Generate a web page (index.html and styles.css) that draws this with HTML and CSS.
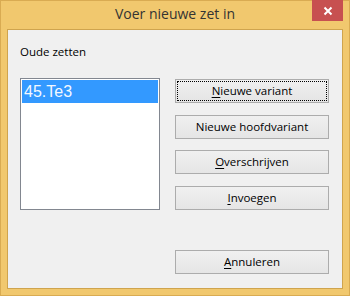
FILE: index.html
```html
<!DOCTYPE html>
<html>
<head>
<meta charset="utf-8">
<link rel="stylesheet" href="styles.css">
</head>
<body>
<div class="window">
  <div class="titlebar">
    <div class="spacer"></div>
    <div class="title">Voer nieuwe zet in</div>
    <div class="close" aria-label="Sluiten">
      <svg width="10" height="10" viewBox="0 0 10 10"><path d="M1.5 1.5 L8.5 8.5 M8.5 1.5 L1.5 8.5" stroke="#fff" stroke-width="2" fill="none"/></svg>
    </div>
  </div>
  <div class="client">
    <div class="label">Oude zetten</div>
    <div class="main">
      <div class="listbox">
        <div class="item selected">45.Te3</div>
      </div>
      <div class="buttons">
        <button class="btn default"><u>N</u>ieuwe variant</button>
        <button class="btn">Nieuwe hoofdvariant</button>
        <button class="btn"><u>O</u>verschrijven</button>
        <button class="btn"><u>I</u>nvoegen</button>
        <button class="btn cancel"><u>A</u>nnuleren</button>
      </div>
    </div>
  </div>
</div>
</body>
</html>
```

FILE: styles.css
```css
html, body {
  margin: 0;
  padding: 0;
  background: #ffffff;
}
.window {
  width: 350px;
  height: 296px;
  box-sizing: border-box;
  border: 1px solid #d9ab52;
  background: #f1c86e;
  display: flex;
  flex-direction: column;
  font-family: "Open Sans", "Noto Sans", sans-serif;
}
.titlebar {
  height: 28px;
  display: grid;
  grid-template-columns: 1fr auto 1fr;
  align-items: start;
}
.title {
  font-size: 14px;
  line-height: 28px;
  color: #333333;
  margin-top: -1px;
}
.close {
  justify-self: end;
  width: 31px;
  height: 21px;
  margin-top: -1px;
  margin-right: 6px;
  background: #c75050;
  display: flex;
  align-items: center;
  justify-content: center;
}
.close svg {
  display: block;
  margin-top: 1px;
}
.client {
  margin: 0 6px 6px;
  height: 260px;
  box-sizing: border-box;
  border: 1px solid #cfa44e;
  background: #f0f0f0;
  padding: 14px 0 0 12px;
}
.label {
  font-size: 11.5px;
  line-height: 15px;
  color: #000;
}
.main {
  display: flex;
  margin-top: 19px;
  gap: 15px;
}
.listbox {
  width: 140px;
  height: 132px;
  box-sizing: border-box;
  border: 1px solid #828790;
  background: #ffffff;
  padding: 1px;
}
.item {
  height: 23px;
  font-family: "Liberation Sans", Arial, sans-serif;
  font-size: 16px;
  line-height: 24px;
  padding-left: 2px;
}
.item.selected {
  background: #3399ff;
  color: #f2f8ff;
}
.buttons {
  margin-top: 1px;
  height: 195px;
  width: 154px;
  display: flex;
  flex-direction: column;
  gap: 11.67px;
}
.btn {
  height: 24px;
  width: 154px;
  box-sizing: border-box;
  border: 1px solid #acacac;
  background: linear-gradient(#f0f0f0, #e5e5e5);
  font-family: "Open Sans", "Noto Sans", sans-serif;
  font-size: 11.5px;
  color: #000;
  padding: 0;
  margin: 0;
  line-height: 20px;
}
.btn.default {
  outline: 1px dotted #000;
  outline-offset: -3px;
}
.btn.cancel {
  margin-top: auto;
}
.btn u {
  text-decoration: underline;
  text-underline-offset: 2px;
}
```
